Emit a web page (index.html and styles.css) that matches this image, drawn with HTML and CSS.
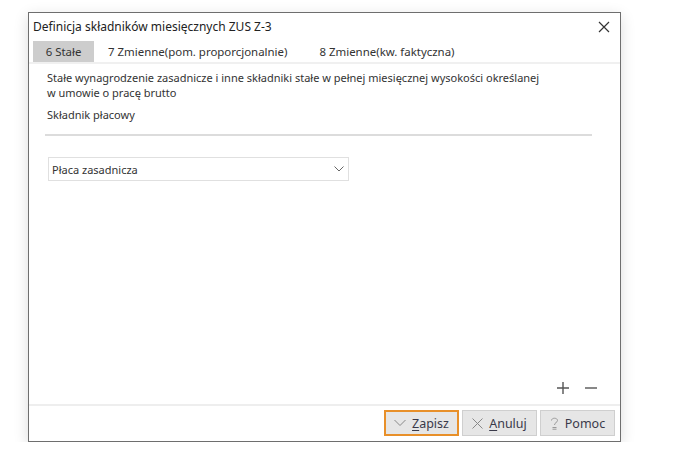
FILE: index.html
```html
<!DOCTYPE html>
<html lang="pl">
<head>
    <meta charset="UTF-8">
    <title>Definicja składników miesięcznych ZUS Z-3</title>
    <link rel="stylesheet" href="styles.css">
</head>
<body>
    <div class="dialog">
        <div class="titlebar">
            <span class="title">Definicja składników miesięcznych ZUS Z-3</span>
            <svg class="close" width="12" height="12" viewBox="0 0 12 12">
                <path d="M1 1 L11 11 M11 1 L1 11" stroke="#333" stroke-width="1.2" fill="none"/>
            </svg>
        </div>
        <div class="tabs">
            <div class="tab active">6 Stałe</div>
            <div class="tab">7 Zmienne(pom. proporcjonalnie)</div>
            <div class="tab">8 Zmienne(kw. faktyczna)</div>
        </div>
        <div class="content">
            <p class="desc">Stałe wynagrodzenie zasadnicze i inne składniki stałe w pełnej miesięcznej wysokości określanej<br>w umowie o pracę brutto</p>
            <p class="label">Składnik płacowy</p>
            <div class="divider"></div>
            <div class="select">
                <span>Płaca zasadnicza</span>
                <svg width="10" height="6" viewBox="0 0 10 6">
                    <path d="M0.5 0.5 L5 5 L9.5 0.5" stroke="#666" stroke-width="1" fill="none"/>
                </svg>
            </div>
            <div class="spacer"></div>
            <div class="rowtools">
                <svg width="12" height="12" viewBox="0 0 12 12">
                    <path d="M6 0 V12 M0 6 H12" stroke="#555" stroke-width="1.4" fill="none"/>
                </svg>
                <svg width="12" height="12" viewBox="0 0 12 12">
                    <path d="M0 6 H12" stroke="#555" stroke-width="1.4" fill="none"/>
                </svg>
            </div>
        </div>
        <div class="footer">
            <button class="btn primary">
                <svg width="12" height="8" viewBox="0 0 12 8"><path d="M0.5 1 L6 6.5 L11.5 1" stroke="#888" stroke-width="1" fill="none"/></svg>
                <span><u>Z</u>apisz</span>
            </button>
            <button class="btn">
                <svg width="11" height="11" viewBox="0 0 11 11"><path d="M0.5 0.5 L10.5 10.5 M10.5 0.5 L0.5 10.5" stroke="#888" stroke-width="1" fill="none"/></svg>
                <span><u>A</u>nuluj</span>
            </button>
            <button class="btn">
                <svg width="9" height="13" viewBox="0 0 9 13"><path d="M1.5 3.5 C1.5 0.5 7.5 0.5 7.5 3.5 C7.5 5.5 4.5 5.5 4.5 8 M2.5 10.5 H6.5 M2.5 12.2 H6.5" stroke="#999" stroke-width="1" fill="none"/></svg>
                <span>Pomoc</span>
            </button>
        </div>
    </div>
</body>
</html>
```

FILE: styles.css
```css
body {
    margin: 0;
    padding: 12px 0 0 28px;
    background: #fff;
    font-family: "Segoe UI", "Noto Sans", Arial, sans-serif;
    font-size: 11px;
    color: #333;
}
.dialog {
    width: 591px;
    height: 428px;
    border: 1px solid #6e6e6e;
    background: #fff;
    display: flex;
    flex-direction: column;
    box-shadow: 0 4px 14px rgba(0, 0, 0, 0.14);
}
.titlebar {
    height: 27px;
    display: flex;
    align-items: center;
    justify-content: space-between;
    padding: 0 10px 0 4px;
}
.title {
    font-size: 12px;
    color: #222;
}
.tabs {
    display: flex;
    margin-top: 1px;
    padding-left: 4px;
    border-bottom: 2px solid #f0f0f0;
}
.tab {
    height: 21px;
    line-height: 21px;
    padding: 0 14px;
    font-size: 11.45px;
    color: #333;
    margin-right: 4px;
    white-space: nowrap;
}
.tab.active {
    background: #cdcdcd;
    width: 61px;
    padding: 0;
    margin-right: 0;
    text-align: center;
}
.content {
    flex: 1;
    display: flex;
    flex-direction: column;
    padding: 6px 27px 10px 16px;
}
.desc {
    margin: 0;
    line-height: 15px;
    padding-left: 2px;
}
.label {
    margin: 7px 0 0 2px;
    line-height: 15px;
}
.divider {
    height: 2px;
    background: #dcdcdc;
    margin-top: 12px;
    margin-right: 1px;
}
.select {
    width: 292px;
    height: 22px;
    margin: 21px 0 0 3px;
    border: 1px solid #e0e0e0;
    display: flex;
    align-items: center;
    justify-content: space-between;
    padding: 0 4px 0 3px;
}
.select span {
    font-size: 11px;
}
.spacer {
    flex: 1;
}
.rowtools {
    display: flex;
    justify-content: flex-end;
    gap: 16px;
    margin-right: -4px;
}
.footer {
    border-top: 2px solid #eeeeee;
    display: flex;
    justify-content: flex-end;
    gap: 3px;
    padding: 4px 5px 5px 0;
}
.btn {
    height: 26px;
    width: 75px;
    background: #e6e6e6;
    border: 1px solid #cfcfcf;
    font-family: inherit;
    font-size: 12.5px;
    color: #3a3a4a;
    display: flex;
    align-items: center;
    justify-content: center;
    gap: 6px;
    padding: 0;
}
.btn.primary {
    border: 2px solid #e8902a;
}
.btn u {
    text-underline-offset: 2px;
}
```
